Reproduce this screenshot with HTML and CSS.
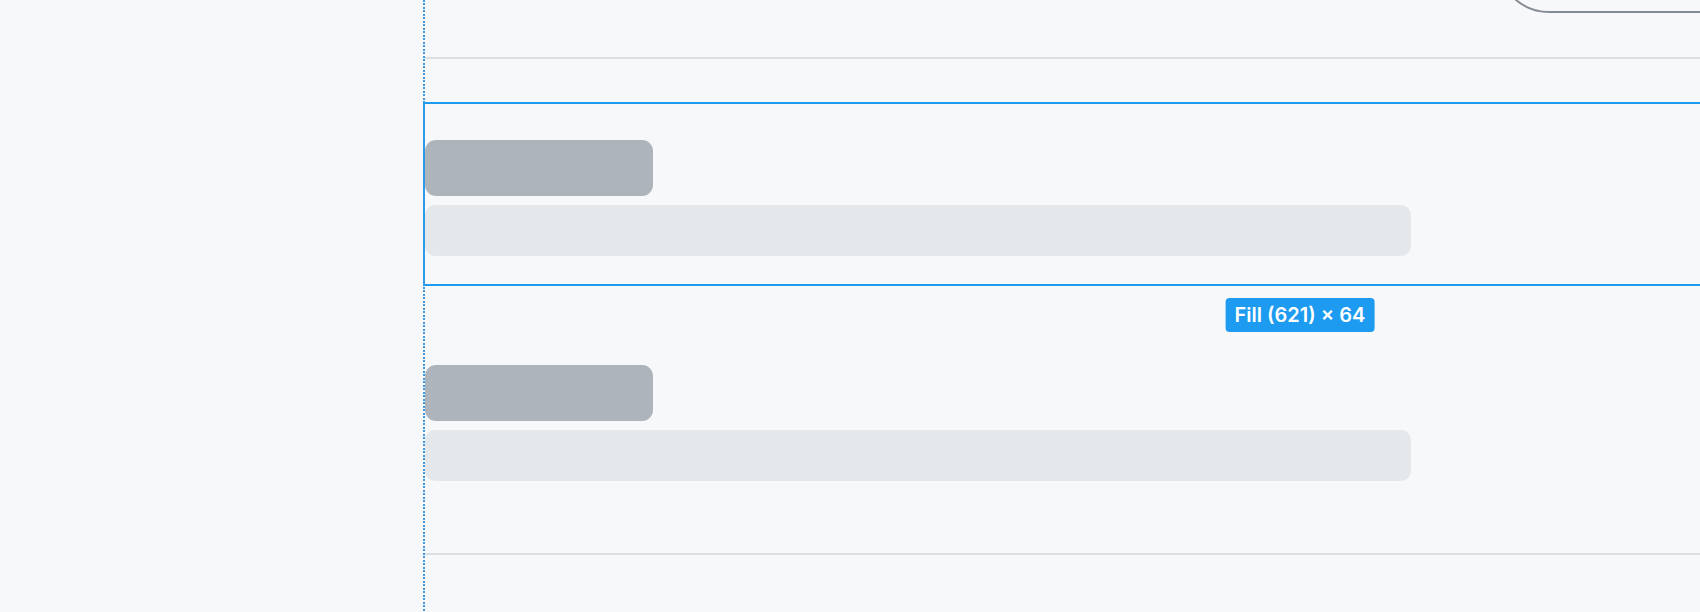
FILE: index.html
```html
<!DOCTYPE html>
<html lang="en">
	<head>
		<meta charset="utf-8">
		<title>Layout editor</title>
		<link rel="stylesheet" href="styles.css">
	</head>
	<body>
		<div id="guide"></div>
		<div id="canvas">
			<div id="column">
				<div id="header">
					<div id="toolbar"></div>
				</div>
				<div class="divider"></div>
				<div id="list">
					<div class="item selected">
						<div class="title"></div>
						<div class="line"></div>
						<div class="size">Fill (621) × 64</div>
					</div>
					<div class="item">
						<div class="title"></div>
						<div class="line"></div>
					</div>
				</div>
				<div class="divider"></div>
			</div>
		</div>
	</body>
</html>
```

FILE: styles.css
```css
body {
	margin: 0;
	background-color: #f6f8fa;
	font-family: Inter, "Noto Sans", sans-serif;
	overflow: hidden;
	height: 612px;
}
#guide {
	position: absolute;
	top: 0;
	left: 423px;
	width: 2px;
	height: 612px;
	background: repeating-linear-gradient(to bottom, #3a99e6 0 2px, transparent 2px 3.5px);
	z-index: 2;
}
#canvas {
	display: flex;
	padding-left: 425px;
}
#column {
	width: 1750px;
	flex-shrink: 0;
}
#header {
	height: 57px;
	display: flex;
	padding-left: 1072px;
}
#toolbar {
	width: 400px;
	height: 113px;
	margin-top: -100px;
	box-sizing: border-box;
	border: 2px solid #868c94;
	border-radius: 52px;
}
.divider {
	height: 2px;
	background-color: #dcdfe2;
}
#list {
	display: flex;
	flex-direction: column;
	gap: 45px;
	padding: 45px 0 44px 0;
}
.item {
	position: relative;
	height: 180px;
	box-sizing: border-box;
	padding: 36px 0 28px 0;
	display: flex;
	flex-direction: column;
	gap: 9px;
}
.item.selected {
	outline: 2px solid #1d9bf0;
}
.title {
	width: 228px;
	height: 56px;
	border-radius: 11px;
	background-color: #aeb4bb;
}
.line {
	width: 986px;
	height: 51px;
	border-radius: 10px;
	background-color: #e5e8eb;
}
.size {
	position: absolute;
	top: 194px;
	left: 50%;
	transform: translateX(-50%);
	height: 34px;
	line-height: 34px;
	padding: 0 9px;
	border-radius: 4px;
	background-color: #1d9bf0;
	color: white;
	font-size: 20px;
	font-weight: 600;
	white-space: nowrap;
}
```
